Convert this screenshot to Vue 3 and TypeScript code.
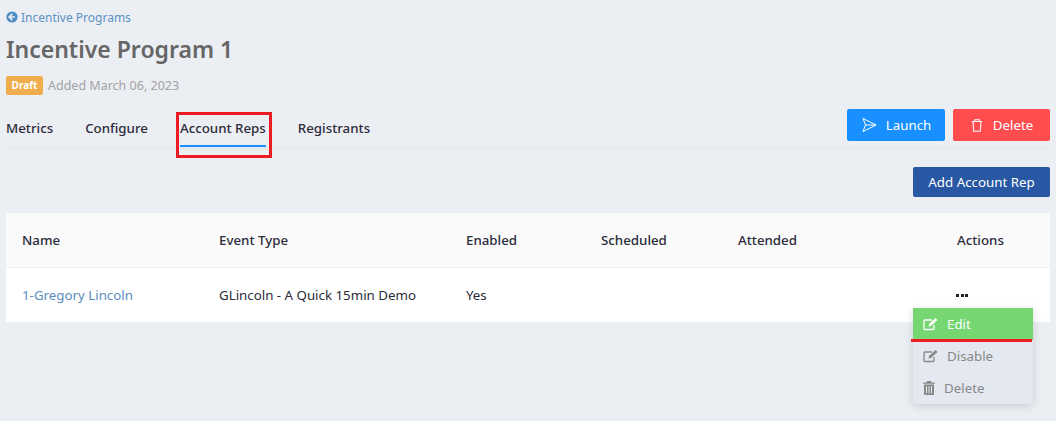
<script setup lang="ts">
const tabs = ['Metrics', 'Configure', 'Account Reps', 'Registrants']
const heads = ['Name', 'Event Type', 'Enabled', 'Scheduled', 'Attended', 'Actions']
</script>

<template>
  <div class="page">
    <a class="back">
      <svg class="back-ic" viewBox="0 0 12 12" width="12" height="12">
        <circle cx="6" cy="6" r="5.6" fill="#4a8cc4" />
        <path d="M6.4 2.800 3.200 6l3.200 3.200M3.400 6h5.600" fill="none" stroke="#ebeef3" stroke-width="1.700" />
      </svg>
      Incentive Programs
    </a>
    <h1 class="title">Incentive Program 1</h1>
    <div class="meta">
      <span class="badge">Draft</span>
      <span class="added">Added March 06, 2023</span>
    </div>
    <div class="tabbar">
      <nav class="tabs">
        <span v-for="t in tabs" :key="t" class="tab" :class="{ active: t === 'Account Reps' }">{{ t }}</span>
      </nav>
      <div class="top-actions">
        <button class="btn launch">
          <svg viewBox="0 0 16 16" width="16" height="16" fill="none" stroke="#fff" stroke-width="1" stroke-linejoin="round">
            <path d="M2 1.500 15 8 2 14.500 4.500 8zM4.500 8H15" />
          </svg>
          Launch
        </button>
        <button class="btn del">
          <svg viewBox="0 0 16 16" width="14" height="15" fill="none" stroke="#fff" stroke-width="1.200">
            <path d="M2 3.500h12M5.500 3.500V1.500h5v2M3.500 3.500l.7 11h7.600l.7-11" />
          </svg>
          Delete
        </button>
      </div>
    </div>
    <div class="add-row">
      <button class="add">Add Account Rep</button>
    </div>
    <div class="table">
      <div class="row head">
        <span v-for="h in heads" :key="h" class="cell">{{ h }}</span>
      </div>
      <div class="row body">
        <span class="cell link">1-Gregory Lincoln</span>
        <span class="cell">GLincoln - A Quick 15min Demo</span>
        <span class="cell">Yes</span>
        <span class="cell"></span>
        <span class="cell"></span>
        <span class="cell dots"><i></i><i></i><i></i></span>
      </div>
    </div>

    <div class="menu">
      <div class="item on">
        <svg viewBox="0 0 16 14" width="16" height="14" fill="none" stroke="currentColor" stroke-width="1.300">
          <path d="M11 8v3.500a1 1 0 0 1-1 1H2a1 1 0 0 1-1-1v-7.500a1 1 0 0 1 1-1h7" />
          <path d="M5.500 9.500l.5-2.500 6.500-6 2 2-6.500 6z" fill="currentColor" stroke="none" />
        </svg>
        <span class="lbl">Edit</span>
      </div>
      <div class="item">
        <svg viewBox="0 0 16 14" width="16" height="14" fill="none" stroke="currentColor" stroke-width="1.300">
          <path d="M11 8v3.500a1 1 0 0 1-1 1H2a1 1 0 0 1-1-1v-7.500a1 1 0 0 1 1-1h7" />
          <path d="M5.500 9.500l.5-2.500 6.500-6 2 2-6.500 6z" fill="currentColor" stroke="none" />
        </svg>
        <span class="lbl">Disable</span>
      </div>
      <div class="item">
        <svg viewBox="0 0 12 14" width="12" height="14" fill="currentColor">
          <path d="M4 0h4l.6 1.500H12v1.300H0V1.500h3.400zM1 3.600h10V13a1 1 0 0 1-1 1H2a1 1 0 0 1-1-1zM3 5.200v7h1v-7zm2.500 0v7h1v-7zm2.500 0v7h1v-7z" fill-rule="evenodd" />
        </svg>
        <span class="lbl short">Delete</span>
      </div>
    </div>

    <div class="mark-box"></div>
    <div class="mark-line"></div>
  </div>
</template>

<style>
html, body { margin: 0; background: #ebeef3; }
</style>

<style scoped>
.page {
  position: relative;
  width: 1056px;
  height: 421px;
  box-sizing: border-box;
  padding: 8px 6px 0;
  overflow: hidden;
  background: #ebeef3;
  font-family: "Noto Sans", "Open Sans", sans-serif;
  font-size: 13.3px;
  color: #2b2b3a;
}
.back {
  display: flex;
  align-items: center;
  gap: 3px;
  height: 18px;
  font-size: 12px;
  color: #5a92c4;
}
.title {
  margin: 5px 0 0;
  height: 36px;
  line-height: 36px;
  font-size: 23px;
  font-weight: 600;
  color: #666;
}
.meta {
  display: flex;
  align-items: center;
  gap: 5px;
  margin-top: 8px;
  height: 20px;
}
.badge {
  display: inline-flex;
  align-items: center;
  justify-content: center;
  width: 37px;
  height: 19px;
  border-radius: 2px;
  background: #f0ad4e;
  color: #fff;
  font-size: 10px;
  font-weight: 700;
}
.added { font-size: 12.500px; color: #a3a3a3; }
.tabbar {
  display: flex;
  justify-content: space-between;
  height: 39px;
  margin-top: 13px;
  border-bottom: 3px solid #e8e9ed;
  box-sizing: content-box;
}
.tabs { display: flex; gap: 32px; }
.tab {
  box-sizing: border-box;
  height: 39px;
  padding-top: 10px;
  line-height: 20px;
  font-weight: 500;
  color: #2b2b3a;
}
.tab.active { border-bottom: 2px solid #1890ff; }
.top-actions { display: flex; gap: 8px; padding-top: 1px; }
.btn {
  display: inline-flex;
  align-items: center;
  justify-content: center;
  gap: 9px;
  height: 32px;
  border: 0;
  border-radius: 2px;
  font: inherit;
  color: #fff;
}
.launch { width: 98px; background: #1890ff; }
.del { width: 97px; background: #ff4d4f; }
.add-row { display: flex; justify-content: flex-end; margin-top: 17px; }
.add {
  width: 137px;
  height: 30px;
  border: 0;
  border-radius: 2px;
  background: #2857a4;
  color: #fff;
  font: inherit;
}
.table { margin-top: 16px; background: #fff; }
.row {
  display: grid;
  grid-template-columns: 197px 247px 135px 137px 219px 109px;
  align-items: center;
}
.head {
  height: 55px;
  background: #fafafa;
  border-bottom: 1px solid #eeeeee;
  font-weight: 500;
  box-sizing: border-box;
}
.body { height: 54px; }
.cell { padding-left: 16px; }
.link { color: #5a8cc0; }
.dots { display: flex; gap: 1.500px; padding-left: 15px; }
.dots i { width: 3px; height: 3px; background: #222; }
.menu {
  position: absolute;
  left: 913px;
  top: 308px;
  width: 120px;
  height: 96px;
  border-radius: 2px;
  background: #e4e8f0;
  box-shadow: 0 2px 8px rgba(0, 0, 0, 0.15);
  color: #888;
}
.item {
  display: flex;
  align-items: center;
  height: 32px;
  padding-left: 10px;
}
.item.on { background: #76d672; color: #fff; }
.lbl { margin-left: 8px; }
.lbl.short { margin-left: 9px; }
.mark-box {
  position: absolute;
  left: 176px;
  top: 112px;
  width: 96px;
  height: 46px;
  box-sizing: border-box;
  border: 3px solid #ed1c24;
}
.mark-line {
  position: absolute;
  left: 911px;
  top: 339px;
  width: 121px;
  height: 3px;
  background: #ed1c24;
}
</style>
